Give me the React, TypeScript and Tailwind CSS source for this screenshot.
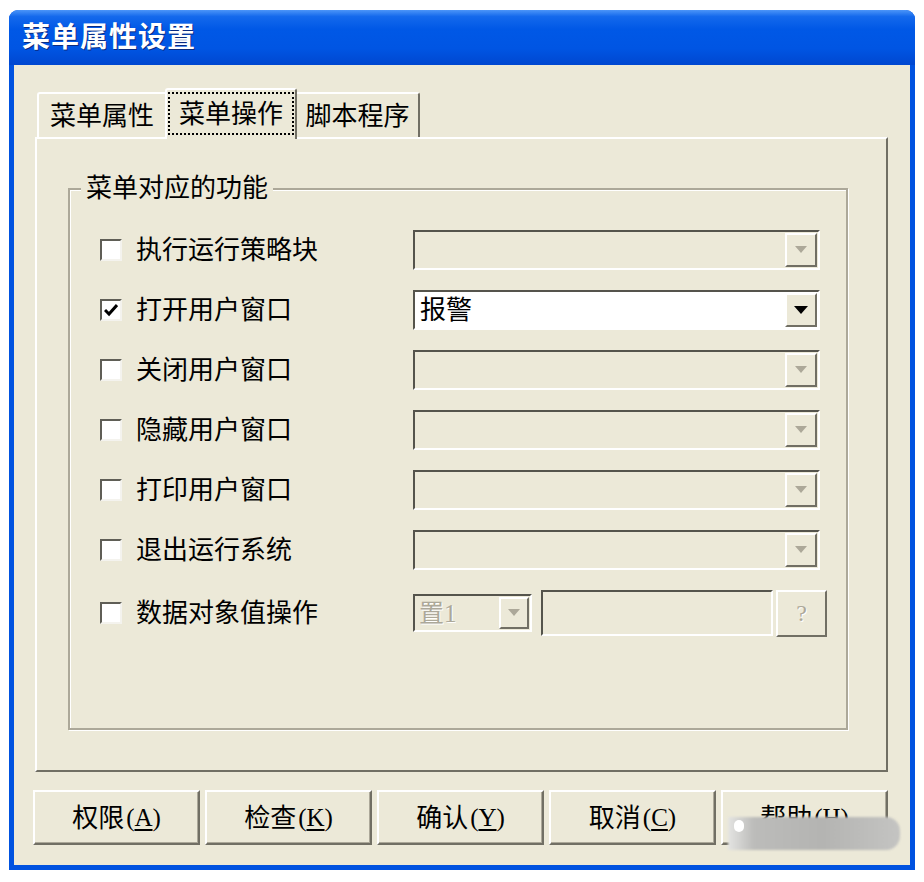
import React from 'react';

const cjk = "font-['Liberation_Sans','Noto_Sans_CJK_SC',sans-serif]";
const serif = "font-['Liberation_Serif','Noto_Sans_CJK_SC',serif]";

const Arrow = ({ enabled }: { enabled: boolean }) => (
  <svg width="14" height="8" viewBox="0 0 14 8">
    <path d={enabled ? 'M0 0 H14 L7 8 Z' : 'M1 0 H13 L7 7 Z'} fill={enabled ? '#000' : '#aca899'} />
  </svg>
);

const DropButton = ({ enabled, width = 'w-[32px]' }: { enabled: boolean; width?: string }) => (
  <div
    className={`${width} my-[1px] mr-[1px] flex items-center justify-center bg-[#ece9d8] border-2 border-t-white border-l-white border-b-[#716f64] border-r-[#716f64]`}
  >
    <Arrow enabled={enabled} />
  </div>
);

const Combo = ({ value, enabled = false }: { value?: string; enabled?: boolean }) => (
  <div
    className={`flex h-[40px] w-[407px] border-2 border-t-[#55544c] border-l-[#55544c] border-b-white border-r-white ${
      enabled ? 'bg-white' : 'bg-[#ece9d8]'
    }`}
  >
    <div className="flex-1 flex items-center pl-[5px] text-[26px] leading-none text-black">{value}</div>
    <DropButton enabled={enabled} />
  </div>
);

const CheckBox = ({ checked = false }: { checked?: boolean }) => (
  <div className="w-[22px] h-[22px] bg-white border-2 border-t-[#5f5e56] border-l-[#5f5e56] border-b-[#f4f3ee] border-r-[#f4f3ee] flex items-center justify-center">
    {checked && (
      <svg width="14" height="13" viewBox="0 0 14 13">
        <path d="M1 6 L5 10 L13 1" stroke="#000" strokeWidth="3" fill="none" />
      </svg>
    )}
  </div>
);

const rows = [
  { label: '执行运行策略块' },
  { label: '打开用户窗口', checked: true, value: '报警' },
  { label: '关闭用户窗口' },
  { label: '隐藏用户窗口' },
  { label: '打印用户窗口' },
  { label: '退出运行系统' },
];

const buttons = [
  { text: '权限', key: 'A' },
  { text: '检查', key: 'K' },
  { text: '确认', key: 'Y' },
  { text: '取消', key: 'C' },
  { text: '帮助', key: 'H' },
];

const App = () => {
  return (
    <div className={`w-[924px] h-[882px] bg-white pt-[10px] pl-[9px] ${cjk}`}>
      <div className="w-[906px] h-[860px] rounded-t-[9px] bg-[#0052e0] flex flex-col overflow-hidden">
        {/* Title bar */}
        <div className="h-[55px] flex items-center pl-[13px] bg-[linear-gradient(180deg,#4c95f8_0%,#1469ec_12%,#0058e6_35%,#0055e3_70%,#0047d0_100%)]">
          <span className="text-white font-bold text-[28px] leading-none tracking-[1px] [text-shadow:1px_1px_0_#0a2a80]">
            菜单属性设置
          </span>
        </div>

        {/* Client area */}
        <div className="flex-1 mx-[5px] mb-[5px] bg-[#ece9d8] pt-[23px] pb-[20px] pl-[21px] pr-[22px] flex flex-col relative">
          {/* Tabs */}
          <div className="h-[49px] flex items-end pl-[2px]">
            <div className="h-[45px] w-[128px] flex items-center justify-center border-t-2 border-l-2 border-t-white border-l-white rounded-tl-[3px] text-[26px] leading-none text-black">
              菜单属性
            </div>
            <div className="relative z-10 -mb-[2px] h-[51px] w-[132px] bg-[#ece9d8] border-t-2 border-l-2 border-r-2 border-t-white border-l-white border-r-[#716f64] rounded-t-[3px] px-[1px] pt-[2px] pb-[4px]">
              <div className="h-full border-2 border-dotted border-black flex items-center justify-center text-[26px] leading-none text-black">
                菜单操作
              </div>
            </div>
            <div className="h-[45px] w-[123px] flex items-center justify-center border-t-2 border-r-2 border-t-white border-r-[#716f64] rounded-tr-[3px] text-[26px] leading-none text-black">
              脚本程序
            </div>
          </div>

          {/* Tab panel */}
          <div className="h-[635px] border-2 border-t-white border-l-white border-r-[#716f64] border-b-[#716f64] pt-[49px] pl-[31px] pr-[38px] pb-[40px] flex flex-col">
            <div className="relative flex-1 border-2 border-[#aca899] shadow-[inset_1px_1px_0_#fff,1px_1px_0_#fff] pt-[40px] pl-[30px]">
              <div className="absolute left-[11px] -top-[18px] px-[5px] bg-[#ece9d8] text-[26px] leading-[32px] text-black">
                菜单对应的功能
              </div>

              <div className="flex flex-col gap-[20px]">
                {rows.map((r) => (
                  <div key={r.label} className="h-[40px] flex items-center">
                    <CheckBox checked={r.checked} />
                    <span className="ml-[14px] w-[277px] text-[26px] leading-none text-black">{r.label}</span>
                    <Combo value={r.value} enabled={!!r.value} />
                  </div>
                ))}

                <div className="h-[46px] flex items-center">
                  <CheckBox />
                  <span className="ml-[14px] w-[277px] text-[26px] leading-none text-black">数据对象值操作</span>
                  <div className="flex h-[38px] w-[119px] border-2 border-t-[#55544c] border-l-[#55544c] border-b-white border-r-white bg-[#ece9d8]">
                    <div
                      className={`flex-1 flex items-center pl-[4px] text-[25px] leading-none text-[#aca899] [text-shadow:1px_1px_0_#fff] ${serif}`}
                    >
                      置1
                    </div>
                    <DropButton enabled={false} width="w-[30px]" />
                  </div>
                  <div className="ml-[9px] h-[46px] w-[232px] border-2 border-t-[#55544c] border-l-[#55544c] border-b-white border-r-white bg-[#ece9d8]" />
                  <div
                    className={`ml-[3px] h-[47px] w-[51px] flex items-center justify-center border-2 border-t-white border-l-white border-b-[#716f64] border-r-[#716f64] text-[24px] text-[#aca899] [text-shadow:1px_1px_0_#fff] ${serif}`}
                  >
                    ?
                  </div>
                </div>
              </div>
            </div>
          </div>

          {/* Buttons */}
          <div className="mt-[18px] grid grid-cols-5 gap-[5px] -ml-[2px]">
            {buttons.map((b) => (
              <div
                key={b.key}
                className="h-[55px] flex items-center justify-center border-2 border-t-white border-l-white border-b-[#716f64] border-r-[#716f64] shadow-[inset_-1px_-1px_0_#aca899] text-[26px] leading-none text-black"
              >
                <span>{b.text}</span>
                <span className={`${serif} text-[25px] ml-[2px]`}>
                  (<span className="underline underline-offset-[3px]">{b.key}</span>)
                </span>
              </div>
            ))}
          </div>

          {/* watermark smear over help button */}
          <div className="absolute left-[714px] top-[752px] w-[172px] h-[33px] rounded-r-[14px] bg-[linear-gradient(90deg,#e4e4e2_0%,#bcbcba_15%,#b4b4b2_55%,#c4c4c2_100%)] blur-[1px]" />
          <div className="absolute left-[720px] top-[755px] w-[10px] h-[12px] rounded-full bg-white" />
        </div>
      </div>
    </div>
  );
};

export default App;
